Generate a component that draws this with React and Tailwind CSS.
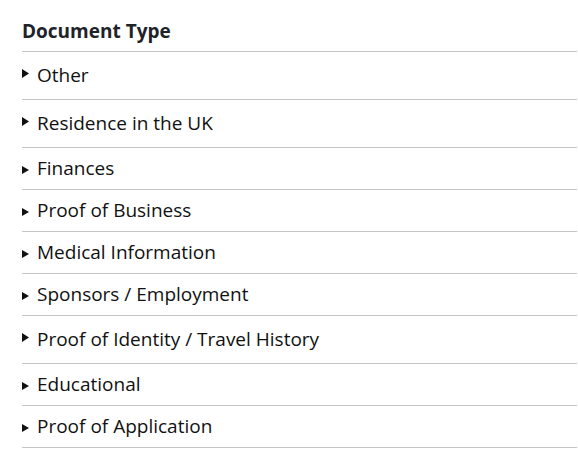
import React from 'react';

const items = [
  { label: 'Other', tall: true },
  { label: 'Residence in the UK', tall: true },
  { label: 'Finances' },
  { label: 'Proof of Business' },
  { label: 'Medical Information' },
  { label: 'Sponsors / Employment' },
  { label: 'Proof of Identity / Travel History', tall: true },
  { label: 'Educational' },
  { label: 'Proof of Application' },
];

const Row = ({ label, tall }) => (
  <div
    className={`flex items-center border-b border-[#c4c4c4] ${tall ? 'h-[48px]' : 'h-[42px]'}`}
  >
    {tall ? (
      <svg width="7" height="9" viewBox="0 0 7 9" className="mr-[8px] -mt-[5px] shrink-0">
        <path d="M0 0 L7 4.5 L0 9 Z" fill="#111" />
      </svg>
    ) : (
      <svg width="7" height="8" viewBox="0 0 7 8" className="mr-[8px] mt-[2px] shrink-0">
        <path d="M0 0 L7 4 L0 8 Z" fill="#111" />
      </svg>
    )}
    <span className="text-[19px] leading-[26px] mb-[2px] text-[#111]">{label}</span>
  </div>
);

export default function App() {
  return (
    <div
      className="w-[578px] h-[474px] bg-white pl-[22px] pr-[1px]"
      style={{ fontFamily: '"Open Sans", "Noto Sans", sans-serif' }}
    >
      <div className="h-[52px] border-b border-[#c4c4c4] flex items-end pb-[7px]">
        <h2 className="text-[19px] leading-[26px] font-bold text-[#1e2328]">Document Type</h2>
      </div>
      {items.map((it) => (
        <Row key={it.label} {...it} />
      ))}
    </div>
  );
}
